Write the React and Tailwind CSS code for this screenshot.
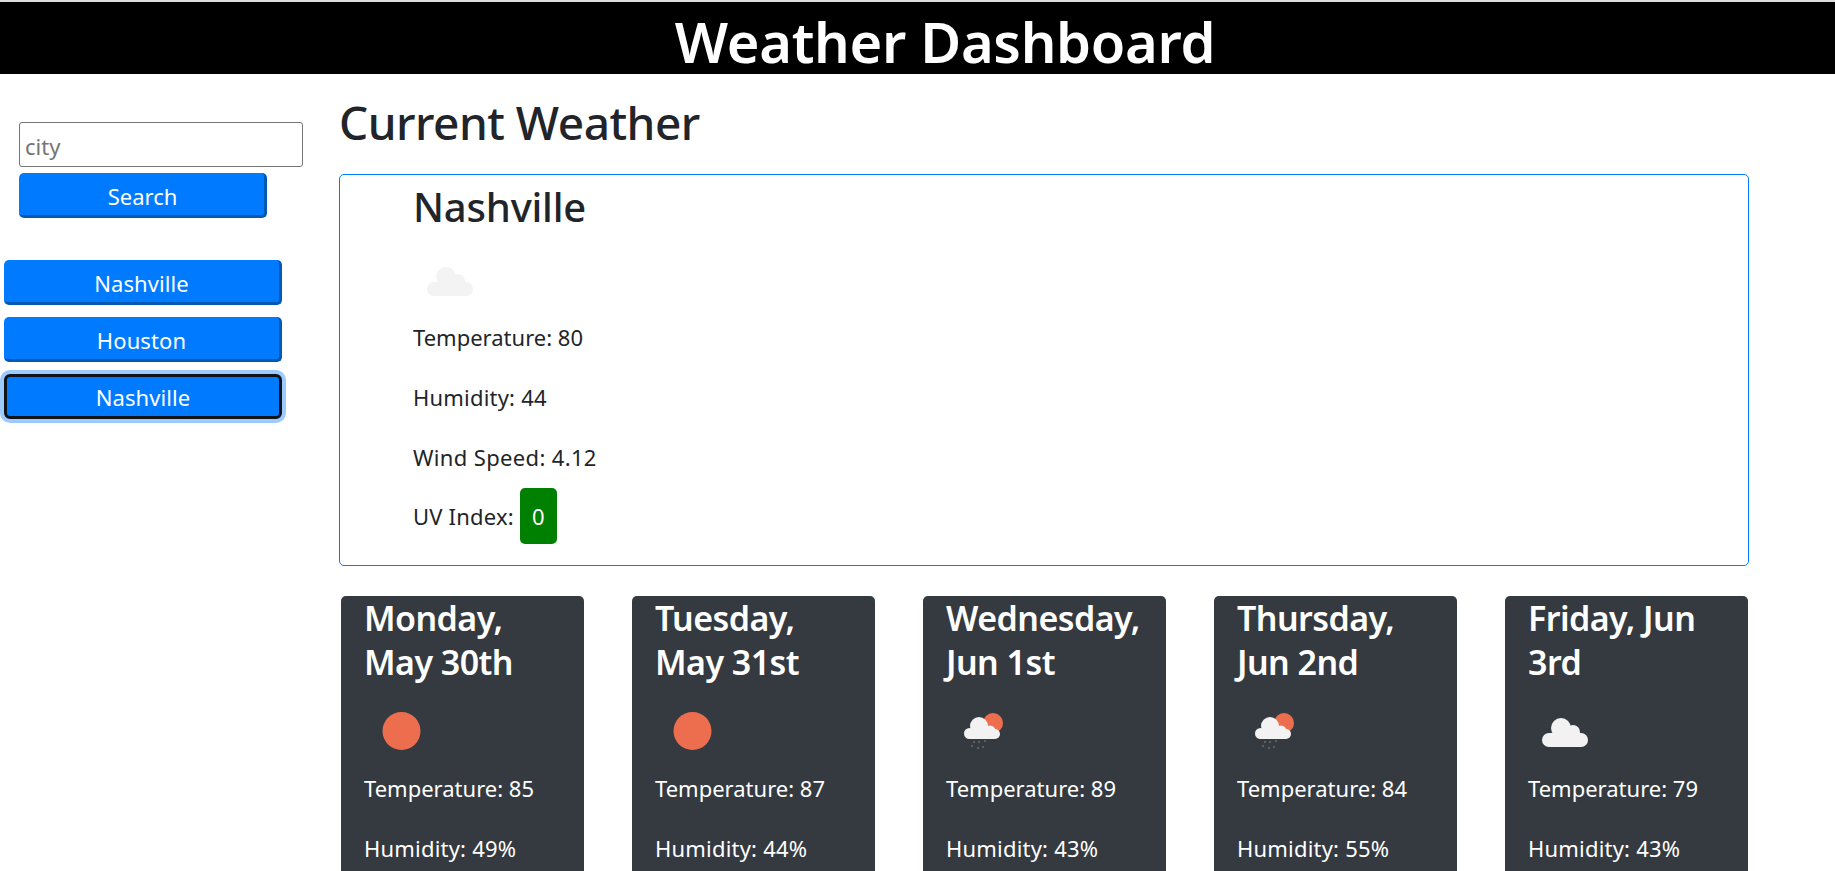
const FONT = 'font-["Noto_Sans","Open_Sans",sans-serif]';

const forecast = [
  { title: 'Monday, May 30th', icon: 'sun', temp: 85, humidity: 49 },
  { title: 'Tuesday, May 31st', icon: 'sun', temp: 87, humidity: 44 },
  { title: 'Wednesday, Jun 1st', icon: 'rain', temp: 89, humidity: 43 },
  { title: 'Thursday, Jun 2nd', icon: 'rain', temp: 84, humidity: 55 },
  { title: 'Friday, Jun 3rd', icon: 'cloud', temp: 79, humidity: 43 },
];

function WeatherIcon({ kind, fill = '#f2f2f2' }) {
  return (
    <svg viewBox="0 0 75 75" className="block w-[75px] h-[75px] blur-[0.4px]">
      {kind === 'sun' && <circle cx="37.5" cy="36" r="19" fill="#ed6e4e" />}
      {kind === 'rain' && (
        <g transform="translate(1 0)">
          <circle cx="46" cy="28" r="10" fill="#ed6e4e" />
          <g fill={fill}>
            <circle cx="22.5" cy="38.5" r="5.5" />
            <circle cx="32" cy="31" r="9" />
            <circle cx="43" cy="36" r="5.5" />
            <circle cx="48" cy="39" r="5" />
            <rect x="22" y="36" width="26" height="8" />
          </g>
          <g fill="#5b5e63">
            <circle cx="27" cy="47" r="1.2" />
            <circle cx="32" cy="47" r="1.2" />
            <circle cx="38" cy="46" r="1.2" />
            <circle cx="25" cy="51" r="1.2" />
            <circle cx="31" cy="53" r="1.2" />
            <circle cx="36" cy="52" r="1.2" />
          </g>
        </g>
      )}
      {kind === 'cloud' && (
        <g fill={fill}>
          <circle cx="21" cy="45" r="7" />
          <circle cx="33" cy="33" r="10" />
          <circle cx="45" cy="37" r="7" />
          <circle cx="53" cy="45" r="7" />
          <rect x="21" y="38" width="32" height="14" />
        </g>
      )}
    </svg>
  );
}

function CityButton({ name, focused }) {
  return (
    <button
      type="button"
      className={`w-[278px] h-[45px] bg-[#007bff] text-white text-[22px] tracking-[0.1px] ${
        focused
          ? 'pt-[2px] rounded-[6px] border-[3px] border-[#101418] ring-[4px] ring-[#9ecbff]'
          : 'pt-[5px] rounded-[5px] border-r-[3px] border-b-[3px] border-[#0059b3]'
      }`}
    >
      {name}
    </button>
  );
}

export default function App() {
  return (
    <div className={`h-[871px] overflow-hidden bg-white text-[#212529] ${FONT}`}>
      <header className="h-[74px] border-t-2 border-[#dddddd] bg-black text-white flex justify-center pl-[55px] pt-[3px]">
        <h1 className="text-[56px] leading-[72px] font-semibold tracking-[-0.3px]">Weather Dashboard</h1>
      </header>

      <div className="flex">
        <aside className="w-[339px] shrink-0">
          <div className="pl-[19px] pt-[48px]">
            <input
              placeholder="city"
              className="block w-[284px] h-[45px] border border-[#767676] rounded-[3px] px-[5px] pt-[2px] text-[22px] placeholder:text-[#757575] outline-none"
            />
            <button
              type="button"
              className="block mt-[6px] w-[248px] h-[45px] pt-[4px] pl-[2px] bg-[#007bff] text-white text-[22px] rounded-[5px] border-r-[3px] border-b-[3px] border-[#0059b3]"
            >
              Search
            </button>
          </div>
          <div className="pl-[4px] pt-[42px] flex flex-col gap-[12px]">
            <CityButton name="Nashville" />
            <CityButton name="Houston" />
            <CityButton name="Nashville" focused />
          </div>
        </aside>

        <main className="w-[1410px]">
          <h2 className="mt-[19px] text-[46px] leading-[58px] font-medium tracking-[-0.5px]">Current Weather</h2>
          <section className="mt-[23px] h-[392px] border border-[#007bff] rounded-[5px] pl-[73px] pt-[7px]">
            <h3 className="text-[40px] leading-[50px] font-medium tracking-[-0.2px] mb-[12px]">Nashville</h3>
            <WeatherIcon kind="cloud" fill="#f3f3f3" />
            <p className="text-[22px] leading-[36px] mb-[24px]">Temperature: 80</p>
            <p className="text-[22px] leading-[36px] tracking-[0.2px] mb-[24px]">Humidity: 44</p>
            <p className="text-[22px] leading-[36px] tracking-[0.35px] mb-[13px]">Wind Speed: 4.12</p>
            <div className="flex items-center text-[22px] leading-[36px] tracking-[0.2px]">
              <span>UV Index:</span>
              <span className="ml-[6px] w-[37px] h-[56px] rounded-[5px] bg-[#008000] text-white flex items-center justify-center">
                0
              </span>
            </div>
          </section>

          <div className="mt-[30px] flex gap-[48px] pl-[2px]">
            {forecast.map((day) => (
              <article key={day.title} className="w-[243px] shrink-0 bg-[#343a40] text-white rounded-[5px] px-[23px] pb-[24px]">
                <h4 className="pt-[1px] text-[34px] leading-[43.5px] font-semibold tracking-[-0.55px] mb-[11px]">{day.title}</h4>
                <WeatherIcon kind={day.icon} />
                <p className="text-[22px] leading-[36px] mb-[24px]">Temperature: {day.temp}</p>
                <p className="text-[22px] leading-[36px] tracking-[0.2px] mb-[24px]">Humidity: {day.humidity}%</p>
              </article>
            ))}
          </div>
        </main>
      </div>
    </div>
  );
}
